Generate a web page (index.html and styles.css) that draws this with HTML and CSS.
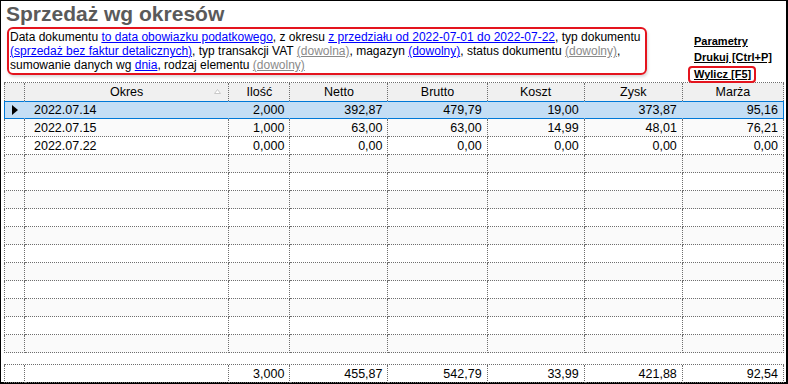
FILE: index.html
```html
<!DOCTYPE html>
<html lang="pl">
<head>
    <meta charset="UTF-8">
    <title>Sprzedaż wg okresów</title>
    <link rel="stylesheet" href="styles.css">
</head>
<body>
    <div class="window">
        <div class="top">
            <div class="intro">
                <h1 class="title">Sprzedaż wg okresów</h1>
                <div class="filter">
                    Data dokumentu <a href="#">to data obowiazku podatkowego</a>, z okresu <a href="#">z przedziału od 2022-07-01 do 2022-07-22</a>, typ dokumentu<br>
                    <a href="#">(sprzedaż bez faktur detalicznych)</a>, typ transakcji VAT <a href="#" class="any">(dowolna)</a>, magazyn <a href="#">(dowolny)</a>, status dokumentu <a href="#" class="any">(dowolny)</a>,<br>
                    sumowanie danych wg <a href="#">dnia</a>, rodzaj elementu <a href="#" class="any">(dowolny)</a>
                </div>
            </div>
            <div class="actions">
                <a href="#">Parametry</a>
                <a href="#">Drukuj [Ctrl+P]</a>
                <a href="#" class="current">Wylicz [F5]</a>
            </div>
        </div>

        <table class="grid">
            <colgroup>
                <col style="width: 21px"><col style="width: 204px"><col style="width: 61px"><col style="width: 98px">
                <col style="width: 99px"><col style="width: 97px"><col style="width: 98px"><col style="width: 101px">
            </colgroup>
            <thead>
                <tr>
                    <th></th>
                    <th class="sorted">Okres
                        <svg class="sort" width="7" height="5" viewBox="0 0 7 5"><path d="M3.5 0.5 L6.5 4.5 L0.5 4.5 Z" fill="#fff" stroke="#c8c8c8"/></svg>
                    </th>
                    <th>Ilość</th>
                    <th>Netto</th>
                    <th>Brutto</th>
                    <th>Koszt</th>
                    <th>Zysk</th>
                    <th>Marża</th>
                </tr>
            </thead>
            <tbody id="rows"></tbody>
        </table>

        <table class="grid total">
            <colgroup>
                <col style="width: 21px"><col style="width: 204px"><col style="width: 61px"><col style="width: 98px">
                <col style="width: 99px"><col style="width: 97px"><col style="width: 98px"><col style="width: 101px">
            </colgroup>
            <tr>
                <td></td>
                <td></td>
                <td class="num">3,000</td>
                <td class="num">455,87</td>
                <td class="num">542,79</td>
                <td class="num">33,99</td>
                <td class="num">421,88</td>
                <td class="num">92,54</td>
            </tr>
        </table>
    </div>

    <script>
        const data = [
            ['2022.07.14', '2,000', '392,87', '479,79', '19,00', '373,87', '95,16'],
            ['2022.07.15', '1,000', '63,00', '63,00', '14,99', '48,01', '76,21'],
            ['2022.07.22', '0,000', '0,00', '0,00', '0,00', '0,00', '0,00']
        ];

        const body = document.getElementById('rows');
        for (let i = 0; i < 14; i++) {
            const row = data[i];
            const tr = document.createElement('tr');
            if (i === 0) tr.className = 'selected';

            let html = '<td class="marker">';
            if (i === 0) {
                html += '<svg width="6" height="10" viewBox="0 0 6 10"><path d="M0 0 L6 5 L0 10 Z" fill="#000"/></svg>';
            }
            html += '</td>';

            if (row) {
                html += `<td class="date">${row[0]}</td>`;
                row.slice(1).forEach(v => { html += `<td class="num">${v}</td>`; });
            } else {
                html += '<td></td>'.repeat(7);
            }
            tr.innerHTML = html;
            body.appendChild(tr);
        }
    </script>
</body>
</html>
```

FILE: styles.css
```css
* {
    margin: 0;
    padding: 0;
    box-sizing: border-box;
}

body {
    background: #fff;
    font-family: "Liberation Sans", Arial, sans-serif;
}

.window {
    width: 788px;
    height: 384px;
    border: 1px solid #000;
    border-right-width: 2px;
    border-bottom-width: 2px;
    padding: 0 3px;
    background: #fff;
}

.top {
    display: flex;
    height: 81px;
}

.intro {
    width: 684px;
}

.title {
    font-size: 21px;
    line-height: 26px;
    font-weight: bold;
    color: #5a5a5a;
    margin-left: 2px;
}

.filter {
    margin-left: 3px;
    width: 640px;
    height: 48px;
    padding: 1px 1px;
    border: 2px solid #e4141e;
    border-radius: 6px;
    box-shadow: 1px 2px 3px rgba(0,0,0,0.15);
    font-size: 12px;
    line-height: 14px;
    color: #000;
    white-space: nowrap;
}

.filter a {
    color: #0000ff;
    text-decoration: underline;
}

.filter a.any {
    color: #8a8a8a;
}

.actions {
    display: flex;
    flex-direction: column;
    align-items: flex-start;
    padding-top: 32px;
}

.actions a {
    display: block;
    padding-left: 6px;
    font-size: 11px;
    line-height: 16px;
    font-weight: bold;
    color: #000;
    text-decoration: underline;
}

.actions a.current {
    position: relative;
    z-index: 1;
    margin-top: 1px;
    padding: 0 3px 0 4px;
    border: 2px solid #e4141e;
    border-radius: 4px;
    line-height: 13px;
    background: #fff;
}

.grid {
    width: 780px;
    table-layout: fixed;
    border-collapse: separate;
    border-spacing: 0;
    border-top: 1px dotted #6e6e6e;
    font-size: 12.5px;
    color: #000;
}

.grid th,
.grid td {
    height: 18px;
    padding: 0 6px;
    border-right: 1px dotted #6e6e6e;
    border-bottom: 1px dotted #6e6e6e;
    white-space: nowrap;
    overflow: hidden;
    line-height: 16px;
}

.grid th:first-child,
.grid td:first-child {
    border-left: 1px dotted #6e6e6e;
}

.grid th {
    background: #f0f0f0;
    font-weight: normal;
    text-align: center;
    position: relative;
}

.grid th .sort {
    position: absolute;
    right: 7px;
    top: 6px;
}

.grid tbody tr:nth-child(even) td {
    background: #fafafa;
}

.grid tr.selected td {
    background: #c4def5;
    border-top: 1px solid #0078d7;
    border-bottom: 1px solid #0078d7;
    border-right: 1px solid transparent;
}

.grid tr.selected td:first-child {
    border-left: 1px solid #0078d7;
}

.grid tr.selected td:last-child {
    border-right: 1px solid #0078d7;
}

.grid thead th {
    border-bottom: none;
}

.grid td.marker {
    padding: 0 0 0 7px;
}

.grid td.marker svg {
    display: block;
}

.grid td.date {
    padding-left: 9px;
}

.grid td.num {
    text-align: right;
    padding-right: 5px;
}

.total {
    margin-top: 11px;
}
```
